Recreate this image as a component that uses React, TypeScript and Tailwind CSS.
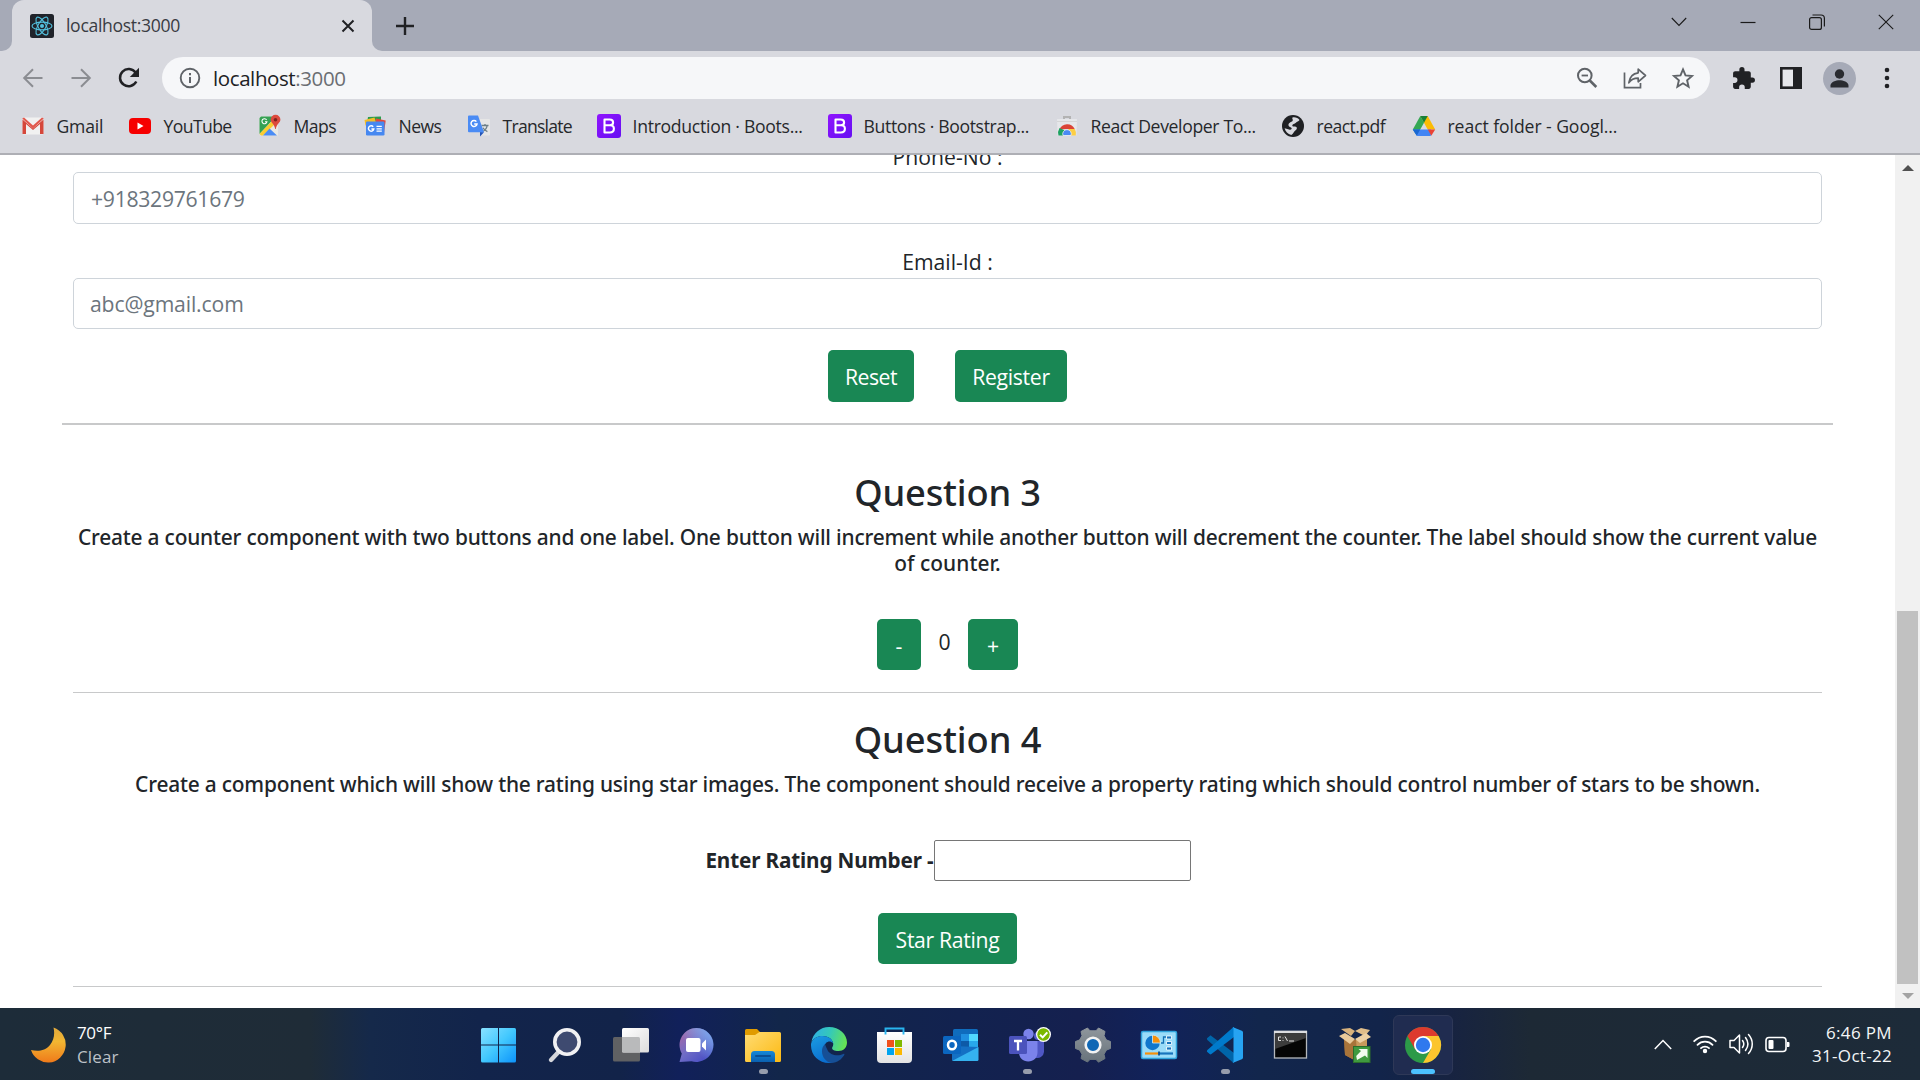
import React from "react";
import type { ReactNode } from "react";

/* ---------- browser chrome icons ---------- */

const ReactFavicon = () => (
  <svg width="24" height="24" viewBox="0 0 24 24">
    <rect width="24" height="24" rx="2.5" fill="#20232a" />
    <g fill="none" stroke="#53c1de" strokeWidth="1.1">
      <ellipse cx="12" cy="12" rx="10" ry="3.9" />
      <ellipse cx="12" cy="12" rx="10" ry="3.9" transform="rotate(60 12 12)" />
      <ellipse cx="12" cy="12" rx="10" ry="3.9" transform="rotate(120 12 12)" />
    </g>
    <circle cx="12" cy="12" r="2" fill="#53c1de" />
  </svg>
);

const GmailIcon = () => (
  <svg width="24" height="24" viewBox="0 0 24 24">
    <rect x="1.5" y="3.5" width="21" height="17" rx="1.5" fill="#f1f1f1" />
    <path d="M1.5 5.5 12 14.5 22.5 5.5V20H19V10l-7 6-7-6v10H1.5Z" fill="#d5473b" />
    <path d="M1.2 4.4 3 3.4l9 8 9-8 1.8 1-10.8 10Z" fill="#e2574c" />
  </svg>
);

const YouTubeIcon = () => (
  <svg width="24" height="24" viewBox="0 0 24 24">
    <rect x="1" y="4" width="22" height="16" rx="4" fill="#f60000" />
    <path d="M9.5 8.6v6.8l6-3.4Z" fill="#fff" />
  </svg>
);

const MapsIcon = () => (
  <svg width="24" height="24" viewBox="0 0 24 24">
    <path d="M3 2.500h17v19H3a1.500 1.500 0 0 1-1.500-1.500V4A1.500 1.500 0 0 1 3 2.500Z" fill="#e9e9e4" />
    <path d="M3 2.500h15L1.500 20V4Z" fill="#36a153" />
    <path d="M14.500 6.500 17 10 5 21.500H3L1.500 20Z" fill="#fbcd2f" />
    <path d="m11.500 14.500 7.500 7H5Z" fill="#4a8cf5" />
    <path d="M8.600 5.900a2.500 2.500 0 1 0 .3 1.900H7" fill="none" stroke="#fff" strokeWidth="1.100" />
    <path d="M17.500.800a4.800 4.800 0 0 1 4.900 4.800c0 3.300-3.700 4.400-4.600 9.400h-.6c-.9-5-4.500-6.100-4.500-9.400A4.800 4.800 0 0 1 17.500.800Z" fill="#dc4a3d" />
    <circle cx="17.500" cy="5.700" r="1.800" fill="#7c231d" />
  </svg>
);

const NewsIcon = () => (
  <svg width="24" height="24" viewBox="0 0 24 24">
    <path d="m5 3 13-.5V9H4Z" fill="#2a9c4c" />
    <path d="m1.500 6 10-2.500 2 6-11 2Z" fill="#f4bd27" />
    <path d="m13 4.500 9.700 2L21 19l-9-5Z" fill="#e2483c" />
    <rect x="3" y="7.500" width="18.500" height="14" rx="1.300" fill="#4688f1" />
    <path d="M10.200 12.700a2.700 2.700 0 1 0 .6 2.200H8.400" fill="none" stroke="#fff" strokeWidth="1.500" />
    <path d="M13.500 12.300h5.300M13.500 14.800h5.300M13.500 17.200h5.300" stroke="#fff" strokeWidth="1.300" />
  </svg>
);

const TranslateIcon = () => (
  <svg width="24" height="24" viewBox="0 0 24 24">
    <path d="M9 5h13a1 1 0 0 1 1 1v14.500a1 1 0 0 1-1 1h-8Z" fill="#e6e6e6" />
    <path d="M14.500 11.500h7M18 10v1.500m2.200 0c-.5 3-2.500 5-5 6.200m.8-4c.8 1.700 2.400 3 4.400 4" stroke="#6d7f86" strokeWidth="1.300" fill="none" />
    <path d="m13 18 4 .2-4 4.300Z" fill="#2355b8" />
    <path d="M2 1.500h9L17 18.300H2a1 1 0 0 1-1-1V2.500a1 1 0 0 1 1-1Z" fill="#4a8bf4" />
    <path d="M9.400 7.600A3 3 0 1 0 10 10H7.200" fill="none" stroke="#fff" strokeWidth="1.500" />
  </svg>
);

const BootstrapIcon = () => (
  <svg width="24" height="24" viewBox="0 0 24 24">
    <defs>
      <linearGradient id="bs" x1="0" y1="0" x2="1" y2="1">
        <stop offset="0" stopColor="#9013fe" />
        <stop offset="1" stopColor="#6610f2" />
      </linearGradient>
    </defs>
    <rect width="24" height="24" rx="3" fill="url(#bs)" />
    <path
      d="M7.500 5.500h5.200c2.200 0 3.400 1.100 3.400 2.900 0 1.700-1.200 2.800-3.300 2.900H7.500h5.600c2.500 0 3.800 1.200 3.800 3.500 0 2.300-1.500 3.700-4.100 3.700H7.500Z"
      fill="none"
      stroke="#fff"
      strokeWidth="2.100"
      strokeLinejoin="round"
    />
  </svg>
);

const WebStoreIcon = () => (
  <svg width="24" height="24" viewBox="0 0 24 24">
    <path d="M9 5V3h6v2" fill="none" stroke="#b3b3b3" strokeWidth="2" />
    <path d="M2 5h20l-.6 16.500H2.600Z" fill="#e6e7ea" />
    <path d="M2 7.500h20" stroke="#d5d5d5" />
    <path d="M4.500 15.500a8.300 8.300 0 0 1 15.200-.5H12Z" fill="#db4437" />
    <path d="M4.500 14a9 9 0 0 0-1 7.500h6L11 17Z" fill="#1da261" />
    <path d="M13 15h6.800a9 9 0 0 1 1 6.500H13Z" fill="#fcce44" />
    <path d="M8 21.500a4.300 4.300 0 1 1 8 0Z" fill="#4a8af4" stroke="#f2f2f2" strokeWidth=".8" />
  </svg>
);

const GlobeIcon = () => (
  <svg width="24" height="24" viewBox="0 0 24 24">
    <circle cx="12" cy="12" r="11" fill="#1f2023" />
    <path
      d="M11.500 3.500c3-.5 5.500.5 7 2.500-1 1.800-2.600 1.600-3.600 2.700-1.200 1.300-3.400 1-3.600 2.800-.2 1.500 2.700.6 4 1.500 1.200.8.400 2.500-1 3.500-1.500 1.100-2 3.300-4 4.600-3.500-.9-6-3.500-6.700-6.800l4.400 1.200c1.500.4 2.700.2 2.700-.9 0-1.300-2.200-1.300-3-2.600-.8-1.500.3-3 1.700-3.700 1.200-.6 2.500-1 2.400-2.300-.1-1-.9-1.600-.3-2.500Z"
      fill="#d8d9df"
    />
  </svg>
);

const DriveIcon = () => (
  <svg width="24" height="24" viewBox="0 0 24 24">
    <path d="M15.700 2 23.200 15.500h-7.500L8.300 2Z" fill="#fbbc04" />
    <path d="M8.300 2 12 8.800 4.800 21.500.8 15.500Z" fill="#34a853" />
    <path d="M8.300 2h7.400L12 8.800Z" fill="#188038" />
    <path d="M5 15.500h14L18.800 22H5.200L.8 15.500Z" fill="#4285f4" />
    <path d="M.8 15.500H8.200L4.700 21.800Z" fill="#1967d2" />
    <path d="M15.800 15.500h7.400l-3.900 6.300Z" fill="#ea4335" />
  </svg>
);

const BackIcon = () => (
  <svg width="22" height="22" viewBox="0 0 22 22" fill="none" stroke="#8b8d92" strokeWidth="2">
    <path d="M20.500 11H2.500M11 2.200 2.200 11l8.800 8.800" />
  </svg>
);
const ForwardIcon = () => (
  <svg width="22" height="22" viewBox="0 0 22 22" fill="none" stroke="#8b8d92" strokeWidth="2">
    <path d="M1.500 11h18M11 2.200l8.800 8.800-8.800 8.800" />
  </svg>
);
const ReloadIcon = () => (
  <svg width="24" height="24" viewBox="0 0 24 24">
    <path d="M19.300 15.500A8.600 8.600 0 1 1 18.600 6.600" fill="none" stroke="#202124" strokeWidth="2.500" />
    <path d="M22 1.800v9.200h-9.200Z" fill="#202124" />
  </svg>
);
const InfoIcon = () => (
  <svg width="22" height="22" viewBox="0 0 22 22">
    <circle cx="11" cy="11" r="9.300" fill="none" stroke="#5f6368" strokeWidth="1.900" />
    <path d="M10 10h2v6h-2zM10 6h2v2.200h-2z" fill="#5f6368" />
  </svg>
);
const ZoomOutIcon = () => (
  <svg width="24" height="24" viewBox="0 0 24 24" fill="none" stroke="#5f6368">
    <circle cx="9.800" cy="9.500" r="6.800" strokeWidth="2" />
    <path d="M6.600 9.500h6.400" strokeWidth="1.800" />
    <path d="m14.800 14.500 6.500 6.500" strokeWidth="2.600" />
  </svg>
);
const ShareIcon = () => (
  <svg width="26" height="24" viewBox="0 0 26 24" fill="none" stroke="#5f6368" strokeWidth="1.700">
    <path d="M2.500 6.500v15.200h16V17" />
    <path d="M16.200 3.200 23.500 9.500l-7.300 6.300v-3.600c-4 0-7 1-9.400 4.600.7-5 3.600-9.300 9.400-10Z" strokeLinejoin="round" />
  </svg>
);
const StarIcon = () => (
  <svg width="24" height="24" viewBox="0 0 24 24" fill="none" stroke="#5f6368" strokeWidth="1.900">
    <path d="m12 3.400 2.500 6 6.500.6-4.900 4.300 1.500 6.400L12 17.300l-5.600 3.400 1.500-6.400L3 10l6.500-.6Z" />
  </svg>
);
const PuzzleIcon = () => (
  <svg width="25" height="25" viewBox="0 0 24 24" fill="#202124">
    <path d="M20.500 11H19V7c0-1.100-.9-2-2-2h-4V3.500a2.500 2.500 0 0 0-5 0V5H4c-1.100 0-2 .9-2 2v3.800h1.500a2.700 2.700 0 0 1 0 5.400H2V20c0 1.100.9 2 2 2h3.800v-1.500a2.700 2.700 0 0 1 5.400 0V22H17c1.100 0 2-.9 2-2v-4h1.500a2.500 2.500 0 0 0 0-5Z" />
  </svg>
);
const SidePanelIcon = () => (
  <svg width="22" height="22" viewBox="0 0 22 22">
    <rect x="1.300" y="1.300" width="19.400" height="19.400" fill="#e6e7eb" stroke="#202124" strokeWidth="2.600" />
    <rect x="13" y="1" width="8" height="20" fill="#202124" />
  </svg>
);
const AvatarIcon = () => (
  <svg width="33" height="33" viewBox="0 0 33 33">
    <circle cx="16.500" cy="16.500" r="16.500" fill="#a6aab7" />
    <circle cx="16.500" cy="12" r="4.700" fill="#292b30" />
    <path d="M7.500 25.500v-2c0-3.300 5.500-5.200 9-5.200s9 1.900 9 5.200v2Z" fill="#292b30" />
  </svg>
);
const DotsIcon = () => (
  <svg width="6" height="22" viewBox="0 0 6 22" fill="#202124">
    <circle cx="3" cy="3" r="2.300" />
    <circle cx="3" cy="11" r="2.300" />
    <circle cx="3" cy="19" r="2.300" />
  </svg>
);

/* ---------- taskbar icons (36 x 36) ---------- */

const Svg36 = ({ children }: { children: ReactNode }) => (
  <svg width="36" height="36" viewBox="0 0 36 36" className="overflow-visible">
    {children}
  </svg>
);

const StartIcon = () => (
  <Svg36>
    <defs>
      <linearGradient id="win" gradientUnits="userSpaceOnUse" x1="0" y1="0" x2="36" y2="36">
        <stop offset="0" stopColor="#8be2ff" />
        <stop offset=".5" stopColor="#42c8fe" />
        <stop offset="1" stopColor="#0a91fb" />
      </linearGradient>
    </defs>
    <g fill="url(#win)">
      <path d="M1.500 1H17v16.500H0v-15A1.500 1.500 0 0 1 1.500 1Z" />
      <path d="M18 1H33.500A1.500 1.500 0 0 1 35 2.500v15H18Z" />
      <path d="M0 18.500H17V35.500H1.500A1.500 1.500 0 0 1 0 34Z" />
      <path d="M18 18.500H35V34a1.500 1.500 0 0 1-1.500 1.500H18Z" />
    </g>
  </Svg36>
);
const SearchIcon = () => (
  <Svg36>
    <path d="m11.500 25-7.500 8" stroke="#d5d7dc" strokeWidth="4.400" strokeLinecap="round" />
    <circle cx="20" cy="15" r="12.200" fill="#3e4a70" stroke="#f1f1f3" strokeWidth="3.600" />
  </Svg36>
);
const TaskViewIcon = () => (
  <Svg36>
    <defs>
      <linearGradient id="tv1" x1="0" y1="0" x2="1" y2="1">
        <stop offset="0" stopColor="#fff" />
        <stop offset="1" stopColor="#dcdcdc" />
      </linearGradient>
    </defs>
    <rect x="0" y="10" width="27" height="24.500" rx="1.500" fill="#606163" />
    <rect x="9" y="1" width="27" height="24.500" rx="1.500" fill="url(#tv1)" />
    <path d="M9 10h16.500a1.500 1.500 0 0 1 1.500 1.500v14H10.500A1.500 1.500 0 0 1 9 24Z" fill="#b9babb" />
  </Svg36>
);
const ChatIcon = () => (
  <Svg36>
    <defs>
      <linearGradient id="chat" x1=".1" y1=".1" x2=".8" y2=".9">
        <stop offset="0" stopColor="#a468a8" />
        <stop offset=".5" stopColor="#6f6cc6" />
        <stop offset="1" stopColor="#4c50c4" />
      </linearGradient>
      <linearGradient id="chat2" x1="1" y1="0" x2=".4" y2=".6">
        <stop offset="0" stopColor="#7fb4f4" />
        <stop offset="1" stopColor="#7fb4f4" stopOpacity="0" />
      </linearGradient>
    </defs>
    <path d="M17.500 1a17 17 0 1 1-5 33.300L.500 35l2.300-8.500A17 17 0 0 1 17.500 1Z" fill="url(#chat)" />
    <circle cx="17.500" cy="18" r="17" fill="url(#chat2)" />
    <rect x="7" y="11" width="14.500" height="14" rx="2" fill="#fff" />
    <path d="M23 16.500 27 12.500v11L23 19.500Z" fill="#fff" />
  </Svg36>
);
const FolderIcon = () => (
  <Svg36>
    <defs>
      <linearGradient id="fold" x1="0" y1="0" x2="1" y2="1">
        <stop offset="0" stopColor="#ffdc74" />
        <stop offset="1" stopColor="#fcb912" />
      </linearGradient>
      <linearGradient id="foldb" x1="0" y1="0" x2="0" y2="1">
        <stop offset="0" stopColor="#1689d8" />
        <stop offset="1" stopColor="#0a60b0" />
      </linearGradient>
    </defs>
    <path d="M0 3.500A1.500 1.500 0 0 1 1.500 2H12l3.500 3.500L10 12H0Z" fill="#e09b00" />
    <path d="M0 8h10l4.500-3H34.500A1.500 1.500 0 0 1 36 6.500v27a1.500 1.500 0 0 1-1.500 1.500h-33A1.500 1.500 0 0 1 0 33.500Z" fill="url(#fold)" />
    <path d="M6 35v-7.500A3.500 3.500 0 0 1 9.500 24h17a3.500 3.500 0 0 1 3.500 3.500V35Z" fill="url(#foldb)" />
    <path d="M11 29h14" stroke="#0a4f94" strokeWidth="2" strokeLinecap="round" />
  </Svg36>
);
const EdgeIcon = () => (
  <Svg36>
    <defs>
      <linearGradient id="ed1" x1="0" y1=".3" x2="1" y2=".5">
        <stop offset="0" stopColor="#2fb1e6" />
        <stop offset=".5" stopColor="#35c9b8" />
        <stop offset="1" stopColor="#66e353" />
      </linearGradient>
      <linearGradient id="ed2" x1="0" y1="0" x2=".4" y2="1">
        <stop offset="0" stopColor="#1b9de2" />
        <stop offset="1" stopColor="#0b6fd0" />
      </linearGradient>
    </defs>
    <path d="M.4 15.500C1.800 6 9.500 0 18 0c10.500 0 18 7.500 18 15.500 0 5.200-3.600 8.500-8.500 8.500-4.500 0-7-1.800-6.300-3.600.8-1.600 1.200-2.400 1-4C21.500 12 17 9 11.500 9 6.500 9 2 11.500.4 15.500Z" fill="url(#ed1)" />
    <path d="M.2 16C2 11.500 6.500 9 11.500 9c5.500 0 9.800 3 10.600 7.200-2-2.200-5-2.400-7.100-.2-3.200 3.700-3 12.500 6.500 17.800 1 .6 0 2.200-3.500 2.200C8 36 0 28.500 0 18.500c0-1 0-1.700.2-2.500Z" fill="url(#ed2)" />
    <path d="M14 17c-4.500 4-3.500 11.500 0 15.200 2 2.300 4.200 3.500 6.500 3.700 5.800-.5 10-3.500 12.800-8 .4-.8-.2-1.300-1-.9-5.800 2.800-13.800.8-15.800-4C15.500 21 14.500 19 14 17Z" fill="#164f96" />
  </Svg36>
);
const StoreIcon = () => (
  <Svg36>
    <defs>
      <linearGradient id="st" x1="0" y1="0" x2="0" y2="1">
        <stop offset="0" stopColor="#fff" />
        <stop offset="1" stopColor="#e3e3e3" />
      </linearGradient>
    </defs>
    <path d="M0 5h35v27a4 4 0 0 1-4 4H4a4 4 0 0 1-4-4Z" fill="url(#st)" />
    <path d="M8.500 7.500V1.500h18v6" fill="none" stroke="#29b5ef" strokeWidth="1.900" />
    <path d="M10 13h7v7h-7z" fill="#f1511b" />
    <path d="M18 13h7v7h-7z" fill="#80b900" />
    <path d="M10 21h7v7h-7z" fill="#00a4ef" />
    <path d="M18 21h7v7h-7z" fill="#fbb800" />
  </Svg36>
);
const OutlookIcon = () => (
  <Svg36>
    <path d="M10 3.500A1.500 1.500 0 0 1 11.500 2h22A1.500 1.500 0 0 1 35 3.500V22H10Z" fill="#0f6cbd" />
    <path d="M18 7h8v7h-8z" fill="#1f8fe0" />
    <path d="M26 7h9v7h-9z" fill="#50d9ff" />
    <path d="M18 14h8v7h-8z" fill="#0d5aa7" />
    <path d="M26 14h9v7h-9z" fill="#28a8ea" />
    <path d="M9 19l26 1v12.500a1.500 1.500 0 0 1-1.500 1.500h-23A1.500 1.500 0 0 1 9 32.500Z" fill="#1470c4" />
    <path d="M35.500 20 9 34h25a1.500 1.500 0 0 0 1.500-1.500Z" fill="#35b2ef" />
    <rect x="0" y="9" width="18" height="18" rx="1.500" fill="#0b66c0" />
    <ellipse cx="9" cy="18" rx="4" ry="4.300" fill="none" stroke="#fff" strokeWidth="2.500" />
  </Svg36>
);
const TeamsIcon = () => (
  <Svg36>
    <circle cx="29" cy="9" r="4" fill="#5059c9" />
    <path d="M22 14h13v11a6.500 6.500 0 0 1-9 5.500Z" fill="#4f57c4" />
    <circle cx="19.500" cy="7" r="5.200" fill="#7b83eb" />
    <path d="M10 14h18.500v11c0 6-4 9.500-9.300 9.500S10 31 10 25Z" fill="#7b83eb" />
    <rect x="0" y="9" width="18" height="18" rx="1.500" fill="#4b53bc" />
    <path d="M5 14h8M9 14v9.500" stroke="#fff" strokeWidth="2.300" />
    <circle cx="34.500" cy="7.500" r="7.500" fill="#fff" />
    <circle cx="34.500" cy="7.500" r="6.200" fill="#7ab800" />
    <path d="m31 7.800 2.700 2.600 4.600-5" stroke="#fff" strokeWidth="2" fill="none" />
  </Svg36>
);
const SettingsIcon = () => (
  <Svg36>
    <defs>
      <linearGradient id="gear" x1="0" y1="0" x2="0" y2="1">
        <stop offset="0" stopColor="#8f969c" />
        <stop offset="1" stopColor="#68737b" />
      </linearGradient>
    </defs>
    <path
      d="M12.500 1 15 3.800h6L23.500 1l6.500 3.500-1 4.300 2.500 4.200 4 1.500v7l-4 1.500-2.500 4.200 1 4.300-6.500 3.700-2.500-2.800h-6L12.500 35 6 31.500l1-4.300L4.500 23l-4-1.500v-7l4-1.500L7 8.800 6 4.500Z"
      fill="url(#gear)"
      stroke="url(#gear)"
      strokeLinejoin="round"
    />
    <circle cx="18" cy="18" r="7.300" fill="#0f67b5" stroke="#f2f2f2" strokeWidth="2.600" />
  </Svg36>
);
const ControlPanelIcon = () => (
  <Svg36>
    <rect x=".5" y="4.500" width="35" height="27" rx="1.500" fill="#9adcf9" stroke="#2fa3dc" strokeWidth="1.500" />
    <circle cx="11.500" cy="16" r="7.200" fill="#1177cc" />
    <path d="M11.500 16V8a8 8 0 0 1 8 8Z" fill="#f6900a" stroke="#cdeefd" strokeWidth=".8" />
    <path d="M20 16h2.500v-6H25" fill="none" stroke="#1470b5" strokeWidth="1.300" />
    <path d="M25.500 9h5v3h-5zM25.500 14.500h5v3h-5zM25.500 20h5v3h-5z" fill="#1774bd" stroke="#fff" strokeWidth=".8" />
    <path d="M4 26.500h14" stroke="#f6900a" strokeWidth="2.200" />
    <path d="M18 26.500h14" stroke="#1774bd" strokeWidth="2.200" />
    <path d="M18 24.500v4" stroke="#0b4f8e" strokeWidth="1.800" />
  </Svg36>
);
const VSCodeIcon = () => (
  <Svg36>
    <path d="M0 11.300 2.700 8.900c.5-.4 1.200-.4 1.700 0L27 26v10h-.5L.400 13c-.5-.5-.6-1.200-.4-1.700Z" fill="#0065a9" />
    <path d="M0 24.700 2.700 27.100c.5.4 1.200.4 1.700 0L27 10V0h-.5L.400 23c-.5.5-.6 1.200-.4 1.700Z" fill="#007acc" />
    <path d="M25.500 0l9.300 3.700c.7.300 1.200 1 1.200 1.800v25c0 .8-.5 1.500-1.200 1.800L25.500 36c.6-.3 1-.9 1-1.700V1.700c0-.8-.4-1.400-1-1.700Z" fill="#27a4f2" />
  </Svg36>
);
const TerminalIcon = () => (
  <Svg36>
    <rect x="1.500" y="4.500" width="32" height="26.500" fill="#050505" stroke="#b5b8bd" strokeWidth="1.300" />
    <path d="M2 7h31v4L2 22Z" fill="#3c3c3c" />
    <path d="M1 5h33" stroke="#dcdde0" strokeWidth="2.400" />
    <path d="M8 10H5.500v3.500H8M10 10.500v.8m0 1.700v.8M12 9.500l2.500 4.500M16 14h5" stroke="#e4e4e4" strokeWidth="1" fill="none" />
  </Svg36>
);
const BoxIcon = () => (
  <Svg36>
    <path d="m5 11 11 2 12-3v17l-10 7.500L6 28Z" fill="#b27c3f" />
    <path d="m17 13 11-3v17l-10 7.500Z" fill="#c99a5c" />
    <path d="m5 11 12 2 1 21.500L6 28Z" fill="#a8743a" />
    <path d="m2 2 9-1 5 3-4 5Z" fill="#d8b27c" />
    <path d="m16 4 6-3 9 2-5 6Z" fill="#e0bd8a" />
    <path d="m0 9 6-3 10 6-5 5Z" fill="#e8c99a" />
    <path d="m16 12 11-6 5 4-11 6Z" fill="#edd0a4" />
    <rect x="14.500" y="19.500" width="16.500" height="16" fill="#3f9a3f" stroke="#2c6e2c" />
    <path d="m18 33-.8-4 4.800-5-2.500-2h9v9l-2.500-2.500Z" fill="#f2fbef" />
  </Svg36>
);
const ChromeIcon = () => (
  <Svg36>
    <circle cx="18" cy="18" r="18" fill="#2c9a48" />
    <path d="M2.400 9A18 18 0 0 1 33.600 9H18l-7.800 13.500Z" fill="#dd3a2e" />
    <path d="M33.600 9A18 18 0 0 1 18 36l7.800-13.500L18 9Z" fill="#fcc52e" />
    <circle cx="18" cy="18" r="9" fill="#fff" />
    <circle cx="18" cy="18" r="7.200" fill="#3079ee" />
  </Svg36>
);

/* ---------- window chrome ---------- */

function TabStrip() {
  return (
    <div className="flex h-[51px] shrink-0 justify-between bg-[#a6aab7]">
      <div className="flex">
        <div className="flex w-3 items-end bg-[#d8d9df]">
          <div className="size-full rounded-br-[10px] bg-[#a6aab7]" />
        </div>
        <div className="flex w-[360px] items-center rounded-t-[12px] bg-[#d8d9df] pr-[17px] pl-[18px]">
          <ReactFavicon />
          <span className="flex-1 pl-3 text-[17.600px] tracking-[-0.320px] text-[#3a3c43]">localhost:3000</span>
          <svg width="14" height="14" viewBox="0 0 14 14" stroke="#202124" strokeWidth="2">
            <path d="m1.500 1.500 11 11m0-11-11 11" />
          </svg>
        </div>
        <div className="w-3 bg-[#d8d9df]">
          <div className="size-full rounded-bl-[10px] bg-[#a6aab7]" />
        </div>
        <div className="flex w-[42px] items-center justify-center">
          <svg width="18" height="18" viewBox="0 0 18 18" stroke="#202124" strokeWidth="2.400">
            <path d="M0 9h18M9 0v18" />
          </svg>
        </div>
      </div>
      <div className="flex h-[43px] *:flex *:w-[69px] *:items-center *:justify-center">
        <div>
          <svg width="16" height="16" viewBox="0 0 16 16" fill="none" stroke="#1a1a1a" strokeWidth="1.100">
            <path d="m.8 4 7.200 7.500L15.200 4" />
          </svg>
        </div>
        <div>
          <svg width="16" height="16" viewBox="0 0 16 16" stroke="#1a1a1a" strokeWidth="1.200">
            <path d="M.5 8.500h15" />
          </svg>
        </div>
        <div>
          <svg width="16" height="16" viewBox="0 0 16 16" fill="none" stroke="#1a1a1a" strokeWidth="1.200">
            <rect x=".6" y="3.600" width="11.800" height="11.800" rx="2" />
            <path d="M3.500 1h8.500a3.400 3.400 0 0 1 3.400 3.400v8.100" />
          </svg>
        </div>
        <div>
          <svg width="16" height="16" viewBox="0 0 16 16" stroke="#1a1a1a" strokeWidth="1.100">
            <path d="m.8.8 14.400 14.400m0-14.400L.8 15.200" />
          </svg>
        </div>
      </div>
    </div>
  );
}

const Cell = ({ children }: { children: ReactNode }) => (
  <div className="flex w-12 shrink-0 items-center justify-center">{children}</div>
);

function Toolbar() {
  return (
    <div className="flex h-[54px] shrink-0 items-center bg-[#d8d9df] px-[9px]">
      <div className="flex">
        <Cell><BackIcon /></Cell>
        <Cell><ForwardIcon /></Cell>
        <Cell><ReloadIcon /></Cell>
      </div>
      <div className="mx-[9px] flex h-[42px] flex-1 items-center rounded-full bg-[#f6f7f9] pr-[3px] pl-[17px]">
        <InfoIcon />
        <span className="flex-1 pt-px pl-[12px] text-[20.500px] tracking-[-0.400px] text-[#202124]">
          localhost<span className="text-[#6b6e73]">:3000</span>
        </span>
        <Cell><ZoomOutIcon /></Cell>
        <Cell><ShareIcon /></Cell>
        <Cell><StarIcon /></Cell>
      </div>
      <div className="flex items-center">
        <Cell><PuzzleIcon /></Cell>
        <Cell><SidePanelIcon /></Cell>
        <Cell><AvatarIcon /></Cell>
        <Cell><DotsIcon /></Cell>
      </div>
    </div>
  );
}

const bookmarks = [
  { label: "Gmail", icon: <GmailIcon />, size: "w-[107px] tracking-[-0.200px]" },
  { label: "YouTube", icon: <YouTubeIcon />, size: "w-[130px] tracking-[-0.600px]" },
  { label: "Maps", icon: <MapsIcon />, size: "w-[105px] tracking-[-0.500px]" },
  { label: "News", icon: <NewsIcon />, size: "w-[104px] tracking-[-0.600px]" },
  { label: "Translate", icon: <TranslateIcon />, size: "w-[130px] tracking-[-0.750px]" },
  { label: "Introduction · Boots...", icon: <BootstrapIcon />, size: "w-[231px] tracking-[-0.280px]" },
  { label: "Buttons · Bootstrap...", icon: <BootstrapIcon />, size: "w-[227px] tracking-[-0.350px]" },
  { label: "React Developer To...", icon: <WebStoreIcon />, size: "w-[226px] tracking-[-0.350px]" },
  { label: "react.pdf", icon: <GlobeIcon />, size: "w-[131px] tracking-[-0.550px]" },
  { label: "react folder - Googl...", icon: <DriveIcon />, size: "w-[230px] tracking-[-0.070px]" },
];

function BookmarksBar() {
  return (
    <div className="flex h-[50px] shrink-0 items-center border-b-2 border-[#aeafb5] bg-[#d8d9df] pb-[6px] pl-[21px]">
      {bookmarks.map((b) => (
        <div key={b.label} className={`flex shrink-0 items-center gap-[11.500px] text-[17.600px] whitespace-nowrap text-[#26282b] ${b.size}`}>
          {b.icon}
          <span>{b.label}</span>
        </div>
      ))}
    </div>
  );
}

/* ---------- page ---------- */

const Btn = ({ className, children }: { className: string; children: ReactNode }) => (
  <button className={`flex shrink-0 items-center justify-center rounded-[5px] bg-[#198754] text-white ${className}`}>{children}</button>
);

function Page() {
  return (
    <main className="flex flex-1 flex-col overflow-hidden bg-white text-center text-[21.200px] text-[#212529]">
      <div className="flex shrink-0 flex-col px-[73px]">
        <label className="-mt-[14px] h-[31px] leading-8">Phone-No :</label>
        <input
          placeholder="+918329761679"
          className="h-[52px] rounded-[5px] border border-[#ced4da] px-[17px] tracking-[-0.300px] placeholder:text-[#6c757d]"
        />
        <label className="mt-[22px] h-8 leading-8">Email-Id :</label>
        <input
          placeholder="abc@gmail.com"
          className="h-[51px] rounded-[5px] border border-[#ced4da] px-4 tracking-[-0.150px] placeholder:text-[#6c757d]"
        />
        <div className="mt-[21px] flex justify-center gap-[41px]">
          <Btn className="h-[52px] w-[86px] pt-[2px] tracking-[-0.500px]">Reset</Btn>
          <Btn className="h-[52px] w-[112px] pt-[2px] tracking-[-0.320px]">Register</Btn>
        </div>
      </div>
      <hr className="mx-[62px] mt-[21px] h-[2px] shrink-0 border-0 bg-[#c8c9ca]" />

      <section className="flex shrink-0 flex-col items-center px-[73px] pt-[44px]">
        <h3 className="font-['Noto_Sans',sans-serif] text-[36.300px] leading-[46px] font-medium tracking-[-0.180px]">Question 3</h3>
        <h6 className="mt-[9px] font-['Noto_Sans',sans-serif] text-[20.900px] leading-[26px] font-medium tracking-[-0.200px]">
          <span className="whitespace-nowrap">
            Create a counter component with two buttons and one label. One button will increment while another button will decrement the counter. The label should show the current value
          </span>
          <br />
          <span className="tracking-[0.050px]">of counter.</span>
        </h6>
        <div className="mt-[43px] flex">
          <Btn className="h-[51px] w-[44px] pt-[3px]">-</Btn>
          <span className="w-[47px] leading-[45px]">0</span>
          <Btn className="h-[51px] w-[50px] pt-[3px]">+</Btn>
        </div>
        <hr className="mt-[22px] h-px w-full border-0 bg-[#c8c9ca]" />
      </section>

      <section className="flex shrink-0 flex-col items-center px-[73px] pt-[23px]">
        <h3 className="font-['Noto_Sans',sans-serif] text-[36.300px] leading-[46px] font-medium tracking-[-0.080px]">Question 4</h3>
        <h6 className="mt-[9px] font-['Noto_Sans',sans-serif] text-[20.900px] leading-[26px] font-medium tracking-[-0.200px] whitespace-nowrap">
          Create a component which will show the rating using star images. The component should receive a property rating which should control number of stars to be shown.
        </h6>
        <div className="mt-[43px] flex items-center pl-px">
          <label className="pt-px font-['Noto_Sans',sans-serif] text-[20.700px] font-bold tracking-[-0.140px]">Enter Rating Number -</label>
          <input className="h-[41px] w-[257px] rounded-[2px] border border-[#767676]" />
        </div>
        <Btn className="mt-[32px] h-[51px] w-[139px] pt-[2px] tracking-[-0.320px]">Star Rating</Btn>
        <hr className="mt-[22px] h-px w-full border-0 bg-[#c8c9ca]" />
      </section>
    </main>
  );
}

function Scrollbar() {
  return (
    <div className="flex w-[25px] flex-col items-center bg-[#f1f1f1] pt-[10px]">
      <svg width="12" height="6" viewBox="0 0 12 6" fill="#505050" className="shrink-0">
        <path d="M0 6 6 0l6 6Z" />
      </svg>
      <div className="mt-[440px] h-[373px] w-[21px] shrink-0 bg-[#c1c1c1]" />
      <svg width="12" height="6" viewBox="0 0 12 6" fill="#a3a3a3" className="mt-[9px] shrink-0">
        <path d="M0 0h12L6 6Z" />
      </svg>
    </div>
  );
}

/* ---------- taskbar ---------- */

const apps: { name: string; icon: ReactNode; state?: "open" | "active" }[] = [
  { name: "Start", icon: <StartIcon /> },
  { name: "Search", icon: <SearchIcon /> },
  { name: "Task View", icon: <TaskViewIcon /> },
  { name: "Chat", icon: <ChatIcon /> },
  { name: "File Explorer", icon: <FolderIcon />, state: "open" },
  { name: "Edge", icon: <EdgeIcon /> },
  { name: "Store", icon: <StoreIcon /> },
  { name: "Outlook", icon: <OutlookIcon /> },
  { name: "Teams", icon: <TeamsIcon />, state: "open" },
  { name: "Settings", icon: <SettingsIcon /> },
  { name: "Control Panel", icon: <ControlPanelIcon /> },
  { name: "VS Code", icon: <VSCodeIcon />, state: "open" },
  { name: "Terminal", icon: <TerminalIcon /> },
  { name: "Package", icon: <BoxIcon /> },
  { name: "Chrome", icon: <ChromeIcon />, state: "active" },
];

function Taskbar() {
  return (
    <footer className="flex h-[72px] shrink-0 items-center bg-[linear-gradient(90deg,#1d2c39_0px,#1f2c37_310px,#15294a_370px,#12244b_480px,#122349_620px,#11205a_680px,#12264a_780px,#12224f_960px,#15204f_1080px,#11225a_1160px,#12264c_1260px,#12244a_1380px,#172341_1450px,#1d2935_1530px,#1d2b39_1920px)]">
      <div className="flex w-[466px] items-center pl-[31px]">
        <svg width="36" height="36" viewBox="0 0 36 36" className="mt-px">
          <defs>
            <linearGradient id="moon" x1="0" y1="0" x2="0" y2="1">
              <stop offset="0" stopColor="#e0a83c" />
              <stop offset=".4" stopColor="#f2b632" />
              <stop offset="1" stopColor="#ef7a1a" />
            </linearGradient>
          </defs>
          <path d="M22.500.5A18 18 0 0 1 18 35.500 18 18 0 0 1 0 23c7 1.500 14 1 19-5 4-5 5-11 3.500-17.500Z" fill="url(#moon)" />
        </svg>
        <div className="flex flex-col pt-[2px] pl-[10px] text-[17px] leading-6">
          <span className="tracking-[-0.360px] text-white">70°F</span>
          <span className="tracking-[0.150px] text-[#bcc1c7]">Clear</span>
        </div>
      </div>

      <div className="mt-[2px] flex">
        {apps.map((a) => (
          <div key={a.name} className="flex w-[66px] justify-center">
            <div
              className={
                a.state === "active"
                  ? "flex h-[60px] w-[60px] flex-col items-center rounded-[6px] border border-[#2e3857] bg-[#202c50] pt-[11px]"
                  : "flex h-[60px] w-[60px] flex-col items-center pt-[12px]"
              }
            >
              {a.icon}
              {a.state === "open" && <div className="mt-[6px] h-[5px] w-[9px] rounded-full bg-[#979dac]" />}
              {a.state === "active" && <div className="mt-[6px] h-[5px] w-6 rounded-full bg-[#4cc2ff]" />}
            </div>
          </div>
        ))}
      </div>

      <div className="flex flex-1 items-center justify-end pr-[28px]">
        <svg width="18" height="11" viewBox="0 0 18 11" fill="none" stroke="#fff" strokeWidth="1.500" className="mr-[21px]">
          <path d="m.8 10 8.200-8.500L17.200 10" />
        </svg>
        <svg width="24" height="20" viewBox="0 0 24 20" fill="none" stroke="#fff" strokeWidth="1.800" strokeLinecap="round" className="mr-3">
          <path d="M1.200 7.200a15 15 0 0 1 21.600 0M4.500 10.800a10.500 10.500 0 0 1 15 0M8 14.200a5.700 5.700 0 0 1 8 0" />
          <circle cx="12" cy="17" r="1.300" fill="#fff" />
        </svg>
        <svg width="25" height="22" viewBox="0 0 25 22" fill="none" stroke="#fff" strokeWidth="1.500" strokeLinecap="round" strokeLinejoin="round" className="mr-[11px]">
          <path d="M1 7.500h4L10.500 2v18L5 14.500H1Z" />
          <path d="M13.500 7.500c1.500 2 1.500 5 0 7M16.500 4.500c3 4 3 9 0 13M19.500 1.500c5 5.500 5 13.500 0 19" />
        </svg>
        <svg width="25" height="17" viewBox="0 0 25 17" className="mr-[22px]">
          <rect x="1" y="1.500" width="20" height="14" rx="3" fill="none" stroke="#fff" strokeWidth="1.600" />
          <rect x="3.500" y="4" width="5" height="9" rx="1" fill="#fff" />
          <path d="M22 6h1.500a1 1 0 0 1 1 1v3a1 1 0 0 1-1 1H22Z" fill="#fff" />
        </svg>
        <div className="flex flex-col text-right text-[17px] leading-[23px] text-[#f4f6f7]">
          <span className="tracking-[0.350px]">6:46 PM</span>
          <span className="tracking-[0.300px]">31-Oct-22</span>
        </div>
      </div>
    </footer>
  );
}

export default function App() {
  return (
    <div className="flex h-[1080px] w-[1920px] flex-col overflow-hidden font-['Open_Sans','Noto_Sans',sans-serif]">
      <TabStrip />
      <Toolbar />
      <BookmarksBar />
      <div className="flex min-h-0 flex-1">
        <Page />
        <Scrollbar />
      </div>
      <Taskbar />
    </div>
  );
}
